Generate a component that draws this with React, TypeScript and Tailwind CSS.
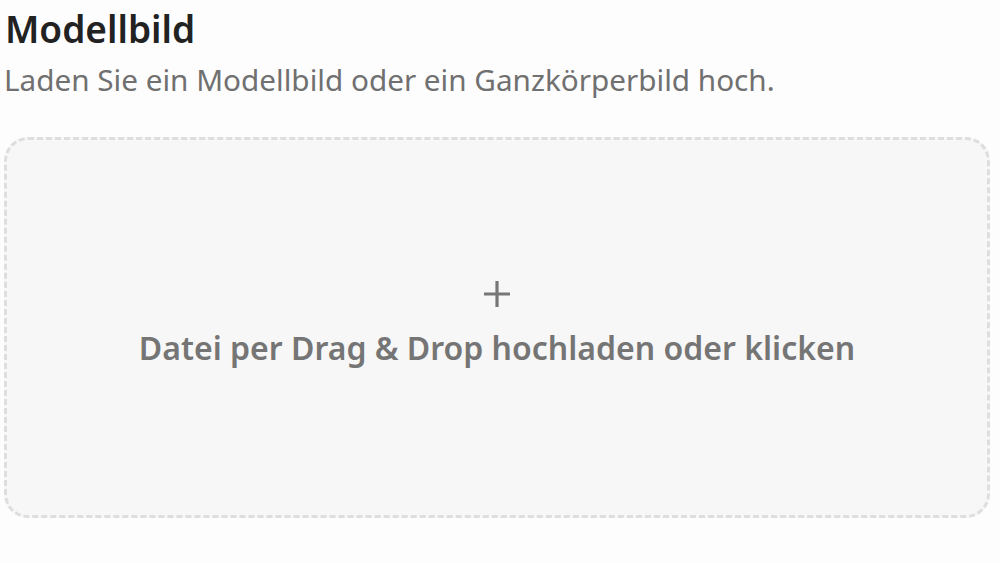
export default function App() {
  return (
    <div
      className="min-h-screen w-full bg-[#fdfdfd] pl-[4px] pr-[10px] pt-[5px]"
      style={{ fontFamily: '"Noto Sans", "Open Sans", sans-serif' }}
    >
      <h1 className="pl-[1px] text-[37px] font-semibold leading-[48px] text-[#222]">Modellbild</h1>
      <p className="mt-[7px] text-[29.7px] leading-[40px] text-[#707070]">
        Laden Sie ein Modellbild oder ein Ganzkörperbild hoch.
      </p>
      <div className="mt-[37px] flex h-[381px] cursor-pointer flex-col items-center justify-center rounded-[24px] border-[3px] border-dashed border-[#dedede] bg-[#f7f7f7] pb-[6px]">
        <svg width="28" height="28" viewBox="0 0 28 28" fill="none" stroke="#777" strokeWidth="3.2">
          <path d="M14 1v26M1 14h26" />
        </svg>
        <span className="mt-[18px] text-[32px] font-semibold leading-[44px] text-[#757575]">
          Datei per Drag &amp; Drop hochladen oder klicken
        </span>
      </div>
    </div>
  );
}
